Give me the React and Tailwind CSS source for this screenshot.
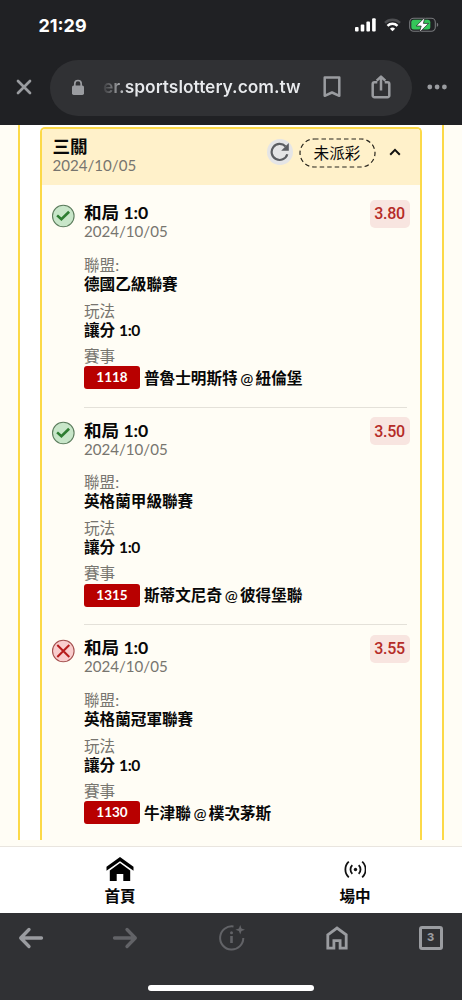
const bets = [
  { id: '1118', won: true, odds: '3.80', league: '德國乙級聯賽', home: '普魯士明斯特', away: '紐倫堡' },
  { id: '1315', won: true, odds: '3.50', league: '英格蘭甲級聯賽', home: '斯蒂文尼奇', away: '彼得堡聯' },
  { id: '1130', won: false, odds: '3.55', league: '英格蘭冠軍聯賽', home: '牛津聯', away: '樸次茅斯' },
];

const StatusBar = () => (
  <div className="flex h-[50px] items-center justify-between pl-[38.5px] pr-[23px] font-['Inter',sans-serif] text-white">
    <span className="pt-px text-[18px] font-bold leading-[22px]">21:29</span>
    <div className="flex items-center gap-[8px]">
      <svg width="21" height="14" viewBox="0 0 21 14" fill="currentColor">
        <rect x="0" y="9" width="3.6" height="4.5" rx="1" />
        <rect x="5.7" y="6.5" width="3.6" height="7" rx="1" />
        <rect x="11.4" y="3.5" width="3.6" height="10" rx="1" />
        <rect x="17.1" y="0.3" width="3.6" height="13.2" rx="1" />
      </svg>
      <svg width="17" height="14" viewBox="0 0 17 14" fill="none" strokeWidth="2.5">
        <path d="M1 4.8a10.6 10.6 0 0 1 15 0" stroke="#4d4e51" />
        <path d="M3.5 7.9a7.1 7.1 0 0 1 10 0" stroke="#fff" />
        <path d="M8.5 13.2 5.9 10.7a3.8 3.8 0 0 1 5.2 0z" fill="#fff" />
      </svg>
      <svg width="30" height="16" viewBox="0 0 30 16">
        <rect x="0.7" y="1.2" width="25.6" height="13" rx="4" fill="none" stroke="#77797c" strokeWidth="1.1" />
        <rect x="2.3" y="2.8" width="19" height="9.8" rx="2.5" fill="#34c759" />
        <path d="M27.8 5.7v4.2c1-.4 1.4-1.1 1.4-2.1s-.4-1.7-1.4-2.1z" fill="#77797c" />
        <path d="M16 .2 7.2 9h5L10.3 15.6l9.3-9.2h-5.2z" fill="#fff" stroke="#202124" strokeWidth="0.7" />
      </svg>
    </div>
  </div>
);

const AddressBar = () => (
  <div className="flex h-[75px] items-center text-[#9a9ca0]">
    <svg className="ml-[16px] mr-[18px] -mt-[2px]" width="16" height="16" viewBox="0 0 16 16" fill="none" stroke="currentColor" strokeWidth="2.7" strokeLinecap="round">
      <path d="m2 2 12 12M14 2 2 14" />
    </svg>
    <div className="flex h-[56px] w-[362px] shrink-0 items-center rounded-full bg-[#303134] pb-px pl-[21px]">
      <svg width="14" height="17" viewBox="0 0 14 17">
        <rect x="1" y="6.5" width="12" height="9.5" rx="1.7" fill="currentColor" />
        <path d="M3.8 7V4.7a3.2 3.2 0 0 1 6.4 0V7" fill="none" stroke="currentColor" strokeWidth="1.7" />
      </svg>
      <span className="ml-[18px] w-[199px] shrink-0 whitespace-nowrap bg-gradient-to-r from-[#3b3c3f] to-[#e8eaed] to-[13%] bg-clip-text font-['Inter',sans-serif] text-[17.4px] font-semibold leading-[24px] text-transparent">
        er.sportslottery.com.tw
      </span>
      <svg className="ml-[21px]" width="18" height="22" viewBox="0 0 18 22" fill="none" stroke="currentColor" strokeWidth="2.5" strokeLinejoin="round">
        <path d="M1.7 1.4h14.6v18.4L9 16.5l-7.3 3.3z" />
      </svg>
      <svg className="ml-[30px]" width="20" height="24" viewBox="0 0 20 24" fill="none" stroke="currentColor" strokeWidth="2.5" strokeLinejoin="round">
        <path d="M6.3 7.2H3.5a1.8 1.8 0 0 0-1.8 1.8v11.4a1.8 1.8 0 0 0 1.8 1.8h13a1.8 1.8 0 0 0 1.8-1.8V9a1.8 1.8 0 0 0-1.8-1.8h-2.8" />
        <path d="M10 15.5V2.2M5.7 5.7 10 1.6l4.3 4.1" />
      </svg>
    </div>
    <svg className="-mt-[2px] ml-[15px]" width="20" height="6" viewBox="0 0 20 6" fill="currentColor">
      <circle cx="2.8" cy="3" r="2.4" />
      <circle cx="10.1" cy="3" r="2.4" />
      <circle cx="17.4" cy="3" r="2.4" />
    </svg>
  </div>
);

const ResultIcon = ({ won }) =>
  won ? (
    <svg width="24" height="24" viewBox="0 0 24 24">
      <circle cx="12.3" cy="12" r="10.8" fill="#c8e6c9" stroke="#5d7d5e" strokeWidth="1.1" />
      <path d="m6.1 11.4 4.3 3.9 7.7-7.6" fill="none" stroke="#2e7d32" strokeWidth="2.6" />
    </svg>
  ) : (
    <svg width="24" height="24" viewBox="0 0 24 24">
      <circle cx="12.3" cy="12" r="10.8" fill="#f9cdcd" stroke="#a4514f" strokeWidth="1.1" />
      <path d="m6.3 6 12 12M18.3 6l-12 12" fill="none" stroke="#b71c1c" strokeWidth="2" />
    </svg>
  );

const BetItem = ({ bet, last }) => (
  <div className="flex h-[217.5px] shrink-0 items-start pl-[9px] pr-[10px] pt-[12px]">
    <div className="mt-[1.5px] w-[33px] shrink-0">
      <ResultIcon won={bet.won} />
    </div>
    <div className={`h-[205.5px] flex-1 ${last ? '' : 'border-b border-[#e4e1d9]'} mr-[3px]`}>
      <div className="flex justify-between">
        <div>
          <h3 className="text-[17.6px] font-bold leading-[21px]">
            和局 <span className="tracking-[-0.1px]">1:0</span>
          </h3>
          <p className="text-[15.1px] leading-[17px] text-[#77756f]">2024/10/05</p>
        </div>
        <span className="-mr-[2.5px] -mt-[2.5px] flex h-[28px] w-[40px] items-center justify-center rounded-[5px] bg-[#f8e5e0] pt-px font-['Roboto',sans-serif] text-[16px] font-medium tracking-[-0.3px] text-[#b52b27]">
          {bet.odds}
        </span>
      </div>
      <dl className="mt-[15.5px] text-[15.6px] leading-[19px]">
        <dt className="text-[#77756f]">聯盟:</dt>
        <dd className="font-bold">{bet.league}</dd>
        <dt className="mt-[8px] text-[#77756f]">玩法</dt>
        <dd className="font-bold">
          讓分 <span className="tracking-[-0.4px]">1:0</span>
        </dd>
        <dt className="mt-[7px] text-[#77756f]">賽事</dt>
        <dd className="mt-[0.5px] flex items-center whitespace-nowrap font-bold">
          <span className="mr-[4px] flex h-[23px] w-[56px] items-center justify-center rounded-[3px] bg-[#b80000] text-[13.5px] font-bold text-white">
            {bet.id}
          </span>
          <span className="pt-px">
            {bet.home}
            <span className="mx-[2.5px] inline-block w-[13px] text-center text-[15.6px] font-medium tracking-[-0.5px]">@</span>
            {bet.away}
          </span>
        </dd>
      </dl>
    </div>
  </div>
);

const Ticket = () => (
  <div className="mt-[2px] flex h-[720px] w-[382px] flex-col overflow-hidden rounded-t-[5px] border-2 border-b-0 border-[#fcd948] bg-[#fffdf5]">
    <div className="mb-[5px] flex h-[56px] shrink-0 items-start bg-[#fff1ca] pl-[10.5px]">
      <div className="mt-[7px] flex-1">
        <h2 className="text-[17.6px] font-bold leading-[21px]">三關</h2>
        <p className="text-[15.1px] leading-[17px] text-[#77756f]">2024/10/05</p>
      </div>
      <div className="mt-[9px] flex h-[30px] items-center">
        <div className="-mt-[2px] flex h-[26px] w-[26px] items-center justify-center rounded-full bg-[#e5e5e6]">
          <svg width="20" height="20" viewBox="0 0 20 20">
            <path d="M15.6 4.6A8 8 0 1 0 17.3 12.3" fill="none" stroke="#5c5e62" strokeWidth="2.2" />
            <path d="M18.8 1v7.7h-7.6z" fill="#5c5e62" />
          </svg>
        </div>
        <svg className="ml-[6px]" width="77" height="30" viewBox="0 0 77 30" fill="none" stroke="#27241c" strokeWidth="1.2">
          <rect x="1" y="1" width="75" height="28" rx="14" strokeDasharray="4.5 3" />
        </svg>
        <span className="-ml-[77px] w-[77px] pt-px text-center text-[15.6px]">未派彩</span>
        <svg className="-mt-[2px] ml-[13.5px] mr-[19px]" width="12" height="8" viewBox="0 0 12 8" fill="none" stroke="#111" strokeWidth="2">
          <path d="m1.2 6.7 4.8-4.8 4.8 4.8" />
        </svg>
      </div>
    </div>
    {bets.map((bet, i) => (
      <BetItem key={bet.id} bet={bet} last={i === bets.length - 1} />
    ))}
  </div>
);

const SiteNav = () => (
  <nav className="flex h-[67px] border-t border-[#e9e5df] bg-white text-[15.6px] font-bold leading-[20px]">
    <a className="flex w-[240px] shrink-0 flex-col items-center pt-[9px]">
      <svg width="28" height="26" viewBox="0 0 28 26" fill="#000">
        <path d="M14 1 .5 10.7v4L14 5.2l13.5 9.5v-4z" />
        <path d="M14 7.1 3.8 14.4V25h6.9v-7h6.6v7h6.9V14.4z" />
      </svg>
      <span className="mt-[4px]">首頁</span>
    </a>
    <a className="flex w-[230px] shrink-0 flex-col items-center pt-[13px]">
      <svg width="22" height="20" viewBox="0 0 22 20" fill="none" stroke="#111" strokeWidth="1.8">
        <circle cx="11.5" cy="9.5" r="1.7" fill="#111" stroke="none" />
        <path d="M8.3 5.2a6 6 0 0 0 0 8.6M14.7 5.2a6 6 0 0 1 0 8.6M4.8 1.7a10.6 10.6 0 0 0 0 15.6M18.2 1.7a10.6 10.6 0 0 1 0 15.6" />
      </svg>
      <span className="mt-[6px]">場中</span>
    </a>
  </nav>
);

const BrowserToolbar = () => (
  <footer className="flex h-[87px] flex-col items-center bg-[#303134]">
    <div className="flex h-[49px] w-full items-center pl-[18px] text-[#9a9ca0]">
      <svg width="26" height="22" viewBox="0 0 26 22" fill="none" stroke="currentColor" strokeWidth="3.3" strokeLinecap="round" strokeLinejoin="round">
        <path d="M23.5 11H3M11 2.5 2.7 11l8.3 8.5" />
      </svg>
      <svg className="ml-[68px] text-[#626367]" width="26" height="22" viewBox="0 0 26 22" fill="none" stroke="currentColor" strokeWidth="3.3" strokeLinecap="round" strokeLinejoin="round">
        <path d="M2.5 11H23M15 2.5l8.3 8.5-8.3 8.5" />
      </svg>
      <svg className="ml-[80px] text-[#626367]" width="28" height="28" viewBox="0 0 28 28" fill="none" stroke="currentColor" strokeWidth="2">
        <path d="M15.5 2.5A11.6 11.6 0 1 0 25.3 14" />
        <path d="M13.5 12v7" strokeWidth="2.6" />
        <circle cx="13.5" cy="8.7" r="1.5" fill="currentColor" stroke="none" />
        <path d="M22.2 1 23.5 4.5 27 5.8 23.5 7.1 22.2 10.6 20.9 7.1 17.4 5.8 20.9 4.5z" fill="currentColor" stroke="none" />
      </svg>
      <svg className="ml-[80px]" width="22" height="24" viewBox="0 0 22 24" fill="none" stroke="currentColor" strokeWidth="2.8">
        <path d="M1.8 8.8 11 2.1l9.2 6.7v13.4h-6.1v-7.6H7.9v7.6H1.8z" />
      </svg>
      <div className="ml-[70.5px] flex h-[24px] w-[24px] items-center justify-center rounded-[3px] border-[3px] border-current font-['Inter',sans-serif] text-[11px] font-extrabold">
        3
      </div>
    </div>
    <div className="mt-[23px] h-[6px] w-[166px] rounded-full bg-white" />
  </footer>
);

export default function App() {
  return (
    <div className="h-[1000px] w-[462px] overflow-hidden bg-[#fffdf5] font-['Lato','Noto_Sans_CJK_TC',sans-serif] text-[#080808]">
      <header className="h-[125px] bg-[#202124]">
        <StatusBar />
        <AddressBar />
      </header>
      <main className="h-[721px] overflow-hidden">
        <div className="ml-[18px] flex h-[715px] w-[426px] justify-center overflow-hidden border-x-2 border-[#fcd948] bg-white">
          <Ticket />
        </div>
      </main>
      <SiteNav />
      <BrowserToolbar />
    </div>
  );
}
